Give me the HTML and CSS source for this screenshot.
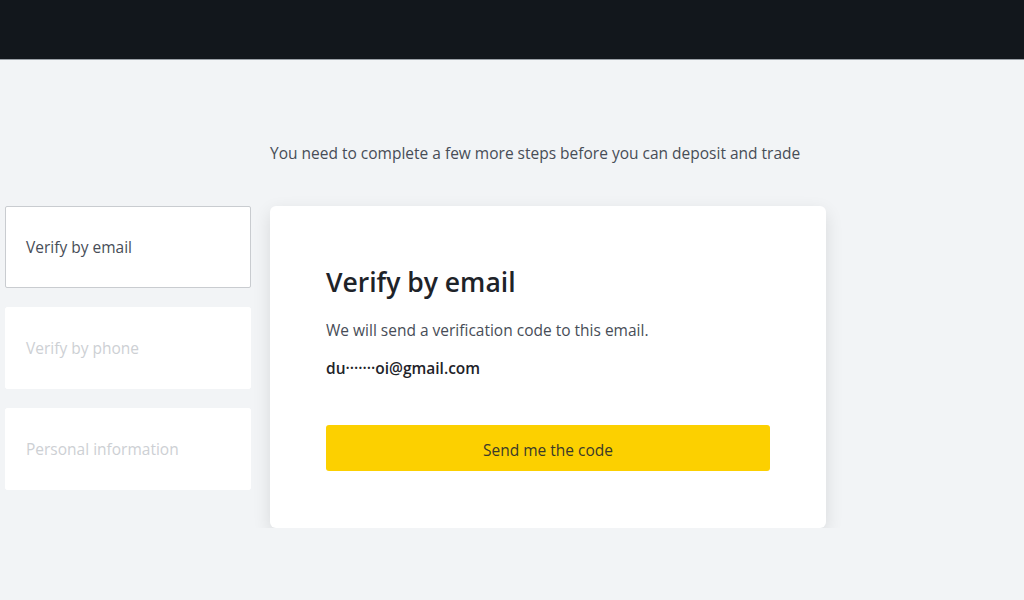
FILE: index.html
```html
<!DOCTYPE html>
<html>
<head>
    <meta charset='utf-8'>
    <title>Verify</title>
    <meta name='viewport' content='width=device-width, initial-scale=1'>
    <link rel="stylesheet" href="styles.css">
</head>
<body>
    <div class="topbar"></div>

    <div class="page">
        <p class="notice">You need to complete a few more steps before you can deposit and trade</p>

        <div class="steps">
            <div class="step active">Verify by email</div>
            <div class="step">Verify by phone</div>
            <div class="step">Personal information</div>
        </div>

        <div class="card">
            <h1 class="card-title">Verify by email</h1>
            <p class="card-text">We will send a verification code to this email.</p>
            <p class="card-email">du&middot;&middot;&middot;&middot;&middot;&middot;&middot;oi@gmail.com</p>
            <button class="send-btn">Send me the code</button>
        </div>
    </div>
</body>
</html>
```

FILE: styles.css
```css
body {
    margin: 0;
    background: #f2f4f6;
    font-family: "Open Sans", "Noto Sans", sans-serif;
    color: #1e2329;
}

/* Top bar */
.topbar {
    height: 59px;
    background: #12171c;
    border-bottom: 1px solid #9aa0a6;
}

/* Layout */
.page {
    display: grid;
    grid-template-columns: 246px 556px;
    grid-template-rows: auto auto;
    column-gap: 19px;
    padding: 82px 0 0 5px;
}

.notice {
    grid-column: 2;
    margin: 0 0 42px 0;
    font-size: 15.5px;
    line-height: 22px;
    color: #474d57;
}

/* Steps */
.steps {
    grid-column: 1;
    display: flex;
    flex-direction: column;
    gap: 19px;
}

.step {
    height: 82px;
    box-sizing: border-box;
    display: flex;
    align-items: center;
    padding-left: 20px;
    background: #fff;
    border: 1px solid #fff;
    border-radius: 2px;
    font-size: 15.5px;
    color: #cdd0d4;
}

.step.active {
    border-color: #c9ccd0;
    color: #474d57;
}

/* Card */
.card {
    grid-column: 2;
    background: #fff;
    border-radius: 6px;
    box-shadow: 0 6px 18px rgba(0, 0, 0, 0.11);
    padding: 59px 56px 0 56px;
    height: 322px;
    box-sizing: border-box;
}

.card-title {
    margin: 0 0 20px 0;
    font-size: 26.5px;
    line-height: 34px;
    font-weight: 600;
}

.card-text {
    margin: 0 0 16px 0;
    font-size: 15.5px;
    line-height: 22px;
    color: #474d57;
}

.card-email {
    margin: 0 0 46px 0;
    font-size: 15.5px;
    line-height: 22px;
    font-weight: 600;
}

.send-btn {
    display: block;
    width: 444px;
    height: 46px;
    padding: 3px 0 0 0;
    border: none;
    border-radius: 3px;
    background: #fcd000;
    font-family: inherit;
    font-size: 15.5px;
    color: #3a3a2a;
    cursor: pointer;
}
```
